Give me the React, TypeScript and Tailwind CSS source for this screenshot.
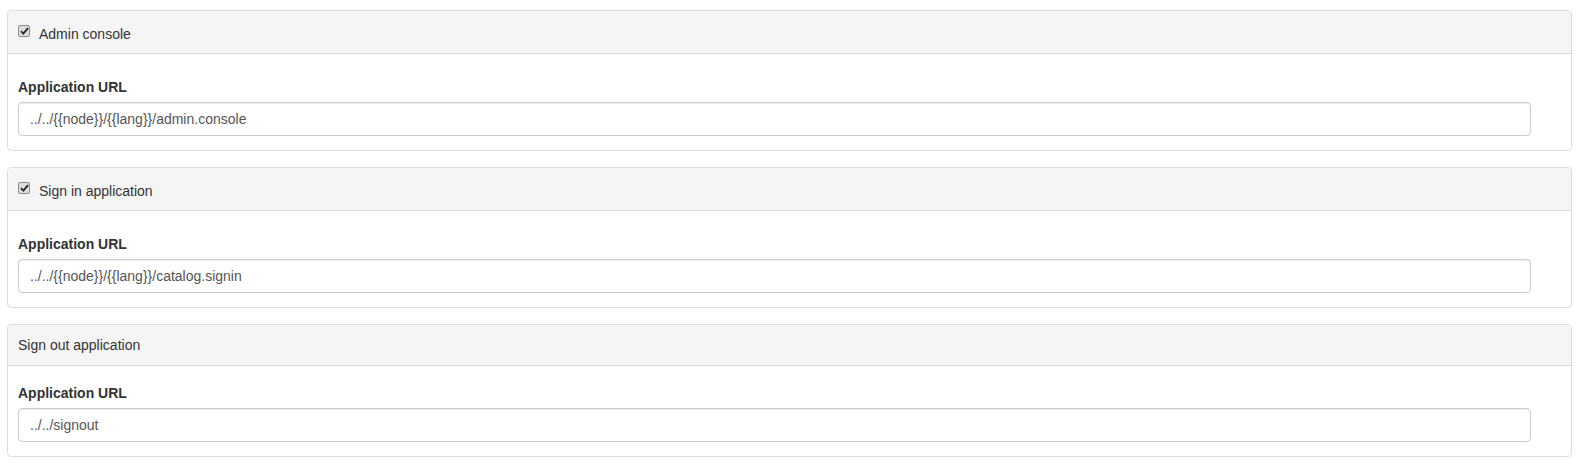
import React from "react";

function Check() {
  return (
    <span className="mt-[1px] mr-[9px] flex h-[12px] w-[12px] shrink-0 items-center justify-center rounded-[2px] border border-[#8f8f8f] bg-[#dcdcdc]">
      <svg width="9" height="8" viewBox="0 0 9 8">
        <path d="M1 4.2 L3.4 6.6 L8 1.2" fill="none" stroke="#2b2b2b" strokeWidth="1.9" />
      </svg>
    </span>
  );
}

function Panel({
  title,
  checkbox,
  value,
}: {
  title: string;
  checkbox: boolean;
  value: string;
}) {
  return (
    <div className="mb-4 rounded-[4px] border border-[#dddddd] bg-white">
      {checkbox ? (
        <div className="flex items-start rounded-t-[3px] border-b border-[#dddddd] bg-[#f5f5f5] px-[10px] pt-[13px] pb-[9px] leading-[20px] text-[#333333]">
          <Check />
          <span>{title}</span>
        </div>
      ) : (
        <div className="rounded-t-[3px] border-b border-[#dddddd] bg-[#f5f5f5] px-[10px] pt-[10px] pb-[10px] leading-[20px] text-[#333333]">
          {title}
        </div>
      )}
      <div
        className={
          checkbox
            ? "pt-[23px] pb-[14px] pl-[10px] pr-[40px]"
            : "pt-[17px] pb-[14px] pl-[10px] pr-[40px]"
        }
      >
        <label className="mb-[5px] block font-bold leading-[20px] text-[#333333]">
          Application URL
        </label>
        <div className="flex h-[34px] items-center rounded-[4px] border border-[#cccccc] bg-white pl-[11px] text-[#555555] shadow-[inset_0_1px_1px_rgba(0,0,0,0.075)]">
          {value}
        </div>
      </div>
    </div>
  );
}

export default function App() {
  return (
    <div
      className="min-h-[465px] bg-white pt-[10px] pl-[7px] pr-[11px] text-[14px]"
      style={{ fontFamily: '"Liberation Sans", Arial, sans-serif' }}
    >
      <Panel title="Admin console" checkbox value="../../{{node}}/{{lang}}/admin.console" />
      <Panel title="Sign in application" checkbox value="../../{{node}}/{{lang}}/catalog.signin" />
      <Panel title="Sign out application" checkbox={false} value="../../signout" />
    </div>
  );
}
